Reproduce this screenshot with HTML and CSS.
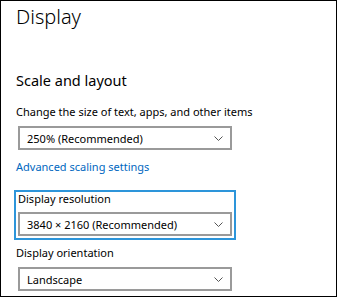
FILE: index.html
```html
<!DOCTYPE html>
<html lang="en">
<head>
    <meta charset="UTF-8">
    <title>Display</title>
    <link rel="stylesheet" href="styles.css">
</head>
<body>
    <div class="frame">
        <h1>Display</h1>

        <h2>Scale and layout</h2>
        <p class="label">Change the size of text, apps, and other items</p>
        <div class="dropdown">
            <span>250% (Recommended)</span>
            <svg class="chevron" width="9" height="5" viewBox="0 0 9 5"><path d="M0.5 0.5 L4.5 4.5 L8.5 0.5" fill="none" stroke="#555" stroke-width="1"/></svg>
        </div>

        <a class="link" href="#">Advanced scaling settings</a>

        <div class="focus-box">
            <p class="label tight">Display resolution</p>
            <div class="dropdown">
                <span>3840 × 2160 (Recommended)</span>
                <svg class="chevron" width="9" height="5" viewBox="0 0 9 5"><path d="M0.5 0.5 L4.5 4.5 L8.5 0.5" fill="none" stroke="#555" stroke-width="1"/></svg>
            </div>
        </div>

        <p class="label orient">Display orientation</p>
        <div class="dropdown">
            <span>Landscape</span>
            <svg class="chevron" width="9" height="5" viewBox="0 0 9 5"><path d="M0.5 0.5 L4.5 4.5 L8.5 0.5" fill="none" stroke="#555" stroke-width="1"/></svg>
        </div>
    </div>
</body>
</html>
```

FILE: styles.css
```css
:root {
    --text-color: #000;
    --link-color: #0067c0;
    --field-border: #9a9a9a;
    --focus-color: #2d95da;
}

body {
    margin: 0;
    background: #fff;
    font-family: "Noto Sans", "Open Sans", sans-serif;
    color: var(--text-color);
}

.frame {
    box-sizing: border-box;
    width: 337px;
    height: 297px;
    border: 1px solid #000;
    padding: 2px 0 0 15px;
    overflow: hidden;
}

h1 {
    margin: 0;
    font-size: 20px;
    font-weight: 300;
    line-height: 28px;
}

h2 {
    margin: 39px 0 0;
    font-size: 14.5px;
    font-weight: 400;
    line-height: 20px;
}

.label {
    margin: 14px 0 0;
    font-size: 11px;
    line-height: 16px;
}

.label.tight {
    margin: 0;
    line-height: 14px;
}

.label.orient {
    margin-top: 5px;
}

.dropdown {
    box-sizing: border-box;
    display: flex;
    align-items: center;
    justify-content: space-between;
    width: 214px;
    height: 24px;
    margin: 6px 0 0 2px;
    padding: 0 7px 0 7px;
    border: 2px solid var(--field-border);
    font-size: 11px;
}

.chevron {
    display: block;
}

.link {
    display: block;
    margin-top: 9px;
    font-size: 11px;
    line-height: 16px;
    color: var(--link-color);
    text-decoration: none;
}

.focus-box {
    box-sizing: border-box;
    width: 222px;
    margin: 15px 0 0 -2px;
    padding: 0 0 2px;
    border: 2px solid var(--focus-color);
}

.focus-box .dropdown,
.orient + .dropdown {
    margin-top: 6px;
}

.focus-box .label {
    margin-left: 2px;
}
```
